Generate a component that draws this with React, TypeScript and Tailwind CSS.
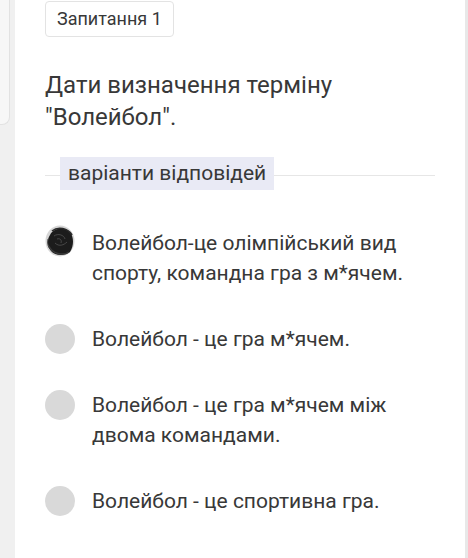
const options = [
  { text: 'Волейбол-це олімпійський вид спорту, командна гра з м*ячем.', picked: true },
  { text: 'Волейбол - це гра м*ячем.', picked: false },
  { text: 'Волейбол - це гра м*ячем між двома командами.', picked: false },
  { text: 'Волейбол - це спортивна гра.', picked: false },
]

function Scribble() {
  return (
    <svg width="30" height="32" viewBox="0 0 30 32" className="shrink-0">
      <ellipse cx="15" cy="16" rx="14.5" ry="15.5" fill="#d6d6d6" />
      <path
        d="M5 10 C8 3 19 1 25 7 C29 12 29 21 25 27 C20 31 10 31 6 26 C2 21 2 14 5 10 Z"
        fill="#1c1c1c"
      />
      <path d="M7 6 C13 1 23 3 27 10" stroke="#2a2a2a" strokeWidth="1.6" fill="none" />
      <path d="M4 21 C7 29 18 31 24 27" stroke="#3a3a3a" strokeWidth="1.4" fill="none" />
      <path d="M3 14 C2 18 3 22 5 24" stroke="#444" strokeWidth="1" fill="none" />
      <path
        d="M9 11 C13 8 19 10 20 14 M10 18 C14 22 19 20 22 17 M12 14 C15 13 17 15 16 18"
        stroke="#5a5a5a"
        strokeWidth="0.7"
        fill="none"
      />
    </svg>
  )
}

export default function App() {
  return (
    <div className="flex w-[468px] h-[558px] bg-[#f0f0f0] overflow-hidden font-['Roboto',sans-serif] text-[#333]">
      {/* left edge of previous panel */}
      <div className="w-[15px] shrink-0">
        <div className="w-[10px] h-[125px] bg-[#f7f7f7] border-r border-b border-[#e2e2e2] rounded-br-lg" />
      </div>

      {/* Card */}
      <div className="w-[450px] shrink-0 bg-white px-[30px] pt-px">
        <div className="inline-block border border-[#e3e3e3] rounded px-[11px] h-[36px] leading-[34px] text-[18px] text-[#383838]">
          Запитання 1
        </div>

        <p className="mt-[32px] text-[24px] leading-[32px] text-[#383838]">
          Дати визначення терміну "Волейбол".
        </p>

        {/* Divider */}
        <div className="relative mt-[24px] h-[33px] flex items-center">
          <div className="absolute left-0 right-0 top-[18px] h-px bg-[#e6e6e6]" />
          <span className="relative ml-[15px] bg-[#e9eaf5] px-[8px] h-[33px] leading-[33px] text-[21px] text-[#383838]">
            варіанти відповідей
          </span>
        </div>

        {/* Options */}
        <div className="mt-[38px] flex flex-col gap-9">
          {options.map((o, i) => (
            <div key={i} className="flex items-start gap-[17px]">
              {o.picked ? (
                <div className="-mt-[3px]">
                  <Scribble />
                </div>
              ) : (
                <div className="w-[30px] h-[30px] rounded-full bg-[#d9d9d9] shrink-0" />
              )}
              <p className="text-[21px] leading-[30px] text-[#383838] w-[320px]">{o.text}</p>
            </div>
          ))}
        </div>
      </div>

      <div className="flex-1 bg-[#e8e8e8]" />
    </div>
  )
}
